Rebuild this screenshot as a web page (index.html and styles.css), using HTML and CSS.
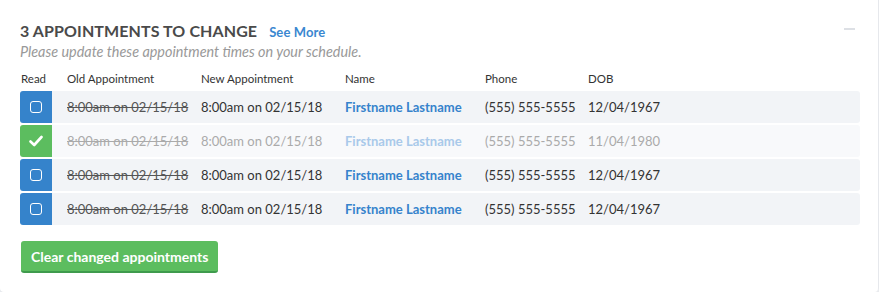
FILE: index.html
```html
<!DOCTYPE html>
<html lang="en">
<head>
  <meta charset="UTF-8" />
  <meta name="viewport" content="width=device-width, initial-scale=1.0"/>
  <title>Appointments to change</title>
  <link rel="stylesheet" href="styles.css">
</head>
<body>
  <div class="card">
    <div class="card-head">
      <div class="title">3 APPOINTMENTS TO CHANGE <a class="see-more" href="#">See More</a></div>
      <span class="collapse"></span>
    </div>
    <div class="subtitle">Please update these appointment times on your schedule.</div>
    <table class="appts">
      <thead>
        <tr>
          <th class="read">Read</th>
          <th>Old Appointment</th>
          <th>New Appointment</th>
          <th>Name</th>
          <th>Phone</th>
          <th>DOB</th>
        </tr>
      </thead>
      <tbody>
        <tr>
          <td class="read"><span class="box"></span></td>
          <td class="old">8:00am on 02/15/18</td>
          <td>8:00am on 02/15/18</td>
          <td class="name">Firstname Lastname</td>
          <td>(555) 555-5555</td>
          <td>12/04/1967</td>
        </tr>
        <tr class="done">
          <td class="read">
            <svg width="14" height="12" viewBox="0 0 14 12"><path d="M1.5 6.5 L5.2 10 L12.5 2" fill="none" stroke="#fff" stroke-width="2.6" stroke-linecap="round" stroke-linejoin="round"/></svg>
          </td>
          <td class="old">8:00am on 02/15/18</td>
          <td>8:00am on 02/15/18</td>
          <td class="name">Firstname Lastname</td>
          <td>(555) 555-5555</td>
          <td>11/04/1980</td>
        </tr>
        <tr>
          <td class="read"><span class="box"></span></td>
          <td class="old">8:00am on 02/15/18</td>
          <td>8:00am on 02/15/18</td>
          <td class="name">Firstname Lastname</td>
          <td>(555) 555-5555</td>
          <td>12/04/1967</td>
        </tr>
        <tr>
          <td class="read"><span class="box"></span></td>
          <td class="old">8:00am on 02/15/18</td>
          <td>8:00am on 02/15/18</td>
          <td class="name">Firstname Lastname</td>
          <td>(555) 555-5555</td>
          <td>12/04/1967</td>
        </tr>
      </tbody>
    </table>
    <button class="btn-clear">Clear changed appointments</button>
  </div>
</body>
</html>
```

FILE: styles.css
```css
html, body {
  margin: 0;
  padding: 0;
  background: #fff;
  font-family: Lato, "Open Sans", sans-serif;
  color: #333;
}
.card {
  width: 879px;
  height: 292px;
  box-sizing: border-box;
  padding: 18px 20px 0 20px;
  border-right: 1px solid #e6e8ec;
  border-radius: 0 0 4px 4px;
  box-shadow: 0 2px 0 #e3e6ea;
}
.card-head {
  display: flex;
  justify-content: space-between;
  align-items: center;
  height: 24px;
}
.title {
  font-size: 16px;
  font-weight: bold;
  color: #4a4a4a;
  letter-spacing: 0.1px;
}
.see-more {
  margin-left: 8px;
  font-size: 13px;
  color: #3a87d0;
  text-decoration: none;
}
.collapse {
  width: 11px;
  height: 2px;
  background: #dde0e5;
  margin-right: 3px;
  margin-top: -2px;
}
.subtitle {
  font-size: 14.4px;
  font-style: italic;
  color: #999;
  margin-top: 1px;
  line-height: 17px;
}
.appts {
  width: 840px;
  table-layout: fixed;
  margin-top: 5px;
  border-collapse: separate;
  border-spacing: 0 2px;
  font-size: 13px;
}
.appts th {
  font-size: 11.5px;
  font-weight: normal;
  text-align: left;
  padding: 5px 0 4px 15px;
  color: #333;
}
.appts th.read {
  padding-left: 1px;
  width: 31px;
}
.appts th:nth-child(2) { width: 119px; }
.appts th:nth-child(3) { width: 129px; }
.appts th:nth-child(4) { width: 125px; }
.appts th:nth-child(5) { width: 88px; }
.appts td {
  height: 32px;
  padding: 0 0 0 15px;
  background: #f2f4f7;
  white-space: nowrap;
}
.appts td:last-child {
  border-radius: 0 3px 3px 0;
}
.appts td.read {
  padding: 0;
  background: #3583cb;
  border-radius: 3px 0 0 3px;
  text-align: center;
  line-height: 0;
}
.appts td.old {
  text-decoration: line-through;
  color: #555;
}
.appts td.name {
  color: #3683cc;
  font-weight: bold;
}
.box {
  display: inline-block;
  width: 10px;
  height: 10px;
  border: 1.5px solid #fff;
  border-radius: 3px;
}
.appts tr.done td {
  background: #f8f9fb;
  color: #aaa;
}
.appts tr.done td.read {
  background: #5cbd5f;
}
.appts tr.done td.name {
  color: #a9c9ea;
}
.btn-clear {
  margin-top: 14px;
  margin-left: 1px;
  height: 32px;
  padding: 0 10px;
  border: none;
  border-bottom: 2px solid #3f9b4d;
  border-radius: 3px;
  background: #5cbd5f;
  color: #fff;
  font-family: Lato, "Open Sans", sans-serif;
  font-size: 14px;
  font-weight: bold;
}
```
